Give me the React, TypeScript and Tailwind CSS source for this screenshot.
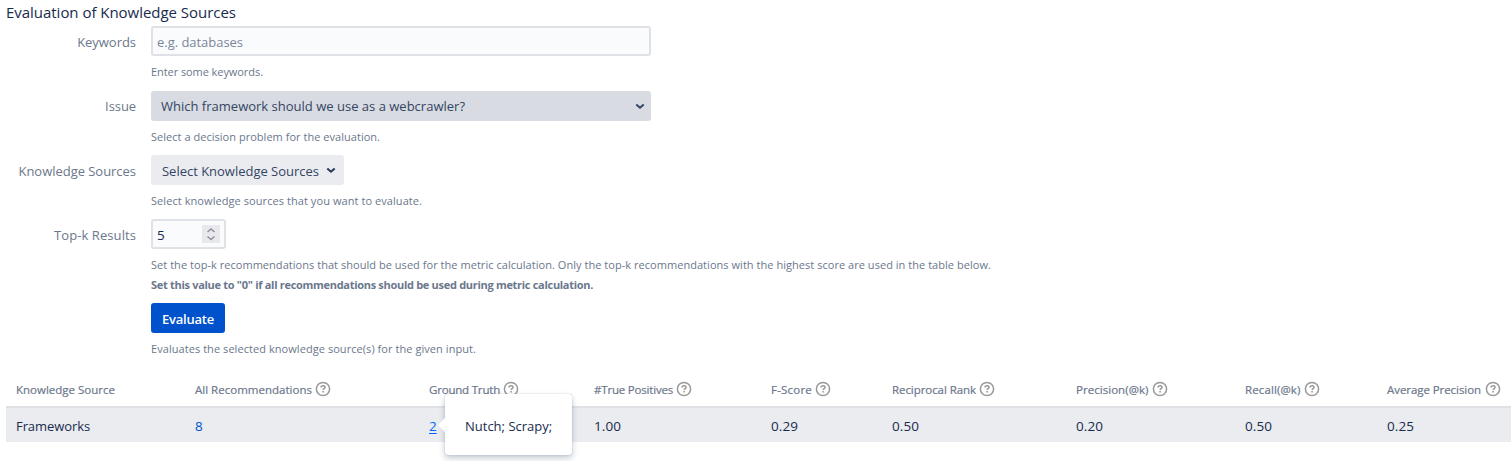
import type { ReactNode } from "react";

function HelpIcon() {
  return (
    <svg width="16" height="16" viewBox="0 0 16 16" fill="none" className="shrink-0" aria-hidden="true">
      <circle cx="8" cy="8" r="6.6" stroke="#999999" strokeWidth="1.5" />
      <path d="M6 6.5C6 5.3 6.8 4.7 8 4.7s2 .7 2 1.700c0 1.300-1.900 1.300-1.900 2.700" stroke="#999999" strokeWidth="1.5" />
      <path d="M8.1 10v1.5" stroke="#999999" strokeWidth="1.6" />
    </svg>
  );
}

function Chevron({ className }: { className: string }) {
  return (
    <svg width="10" height="7" viewBox="0 0 10 7" fill="none" stroke="currentColor" className={className} aria-hidden="true">
      <path d="M1.3 1.4 5 4.7l3.700-3.300" strokeWidth="2" />
    </svg>
  );
}

function Field({ label, labelClass, children }: { label: string; labelClass: string; children: ReactNode }) {
  return (
    <div className="flex">
      <div className={`w-[151px] shrink-0 pr-[15px] text-right leading-[20px] text-[#6b778c] ${labelClass}`}>{label}</div>
      <div className="flex flex-col items-start">{children}</div>
    </div>
  );
}

function Hint({ className, children }: { className: string; children: ReactNode }) {
  return <div className={`whitespace-nowrap text-[11px] leading-[20px] text-[#6b778c] ${className}`}>{children}</div>;
}

const columns = [
  { title: "Knowledge Source", value: "Frameworks", width: "w-[179px]", tracking: "tracking-[0.003px]", gap: "", help: false },
  { title: "All Recommendations", value: "8", width: "w-[234px]", tracking: "tracking-[0.014px]", gap: "ml-[3px]", help: true },
  { title: "Ground Truth", value: "2", width: "w-[165px]", tracking: "tracking-[-0.196px]", gap: "ml-[3px]", help: true },
  { title: "#True Positives", value: "1.00", width: "w-[177px]", tracking: "tracking-[-0.191px]", gap: "ml-[3px]", help: true },
  { title: "F-Score", value: "0.29", width: "w-[121px]", tracking: "tracking-[0.211px]", gap: "ml-[3px]", help: true },
  { title: "Reciprocal Rank", value: "0.50", width: "w-[184px]", tracking: "tracking-[-0.066px]", gap: "ml-[2.500px]", help: true },
  { title: "Precision(@k)", value: "0.20", width: "w-[169px]", tracking: "tracking-[0.040px]", gap: "ml-[3.500px]", help: true },
  { title: "Recall(@k)", value: "0.50", width: "w-[142px]", tracking: "tracking-[0.111px]", gap: "ml-[3px]", help: true },
  { title: "Average Precision", value: "0.25", width: "w-[134px]", tracking: "tracking-[-0.064px]", gap: "ml-[3.500px]", help: true },
];

function Popup() {
  return (
    <div className="absolute left-[26px] top-[-14px] z-10 flex h-[61px] w-[127px] items-center rounded-[3px] bg-white pl-5 pt-[2px] shadow-[0_3px_6px_rgba(9,30,66,0.25),0_0_1px_rgba(9,30,66,0.35)]">
      <svg width="8" height="16" viewBox="0 0 8 16" className="absolute left-[-7px] top-[23px]" aria-hidden="true">
        <path d="M8 0v16L0 8Z" fill="#ffffff" />
      </svg>
      <span className="whitespace-nowrap text-[13px]">Nutch; Scrapy;</span>
    </div>
  );
}

function Cell({ value }: { value: string }) {
  if (value === "8") return <a className="text-[13.500px] text-[#0052cc]">8</a>;
  if (value === "2") return <a className="text-[13.500px] text-[#0065ff] underline underline-offset-2">2</a>;
  if (value === "Frameworks") return <span className="tracking-[-0.081px]">{value}</span>;
  return <span className="text-[13.500px] tracking-[0.074px]">{value}</span>;
}

export default function App() {
  return (
    <div className="h-[461px] overflow-hidden bg-white font-['Open_Sans','Noto_Sans',sans-serif] text-[13px] text-[#172b4d]">
      <h1 className="h-[26px] pl-[6px] pt-px text-[15px] leading-[22px] tracking-[-0.030px]">Evaluation of Knowledge Sources</h1>

      <form className="flex flex-col">
        <div className="h-[65px]">
          <Field label="Keywords" labelClass="pt-[6px] tracking-[-0.040px]">
            <div className="flex h-[30px] w-[500px] items-center rounded-[3px] border-2 border-[#dfe1e6] bg-[#fafbfc] pl-1 pt-[3px] tracking-[-0.033px] text-[#7a869a]">e.g. databases</div>
            <Hint className="mt-[6px] tracking-[-0.070px]">Enter some keywords.</Hint>
          </Field>
        </div>
        <div className="h-[64px]">
          <Field label="Issue" labelClass="pt-[5px] tracking-[-0.080px]">
            <div className="flex h-[30px] w-[500px] items-center justify-between rounded-[3px] bg-[#d8dbe2] pl-[10px] pr-[6px] text-[#344563]">
              <span className="pt-px tracking-[0.006px]">Which framework should we use as a webcrawler?</span>
              <Chevron className="" />
            </div>
            <Hint className="mt-[6px] tracking-[0.030px]">Select a decision problem for the evaluation.</Hint>
          </Field>
        </div>
        <div className="h-[64px]">
          <Field label="Knowledge Sources" labelClass="pt-[6px] tracking-[-0.033px]">
            <div className="flex h-[30px] w-[193px] items-center rounded-[3px] bg-[#ebecf0] pl-[11px] text-[#344563]">
              <span className="w-[164px] whitespace-nowrap pt-[3px] tracking-[-0.013px]">Select Knowledge Sources</span>
              <Chevron className="text-[#253858]" />
            </div>
            <Hint className="mt-[6px] tracking-[0.070px]">Select knowledge sources that you want to evaluate.</Hint>
          </Field>
        </div>
        <div className="h-[84px]">
          <Field label="Top-k Results" labelClass="pt-[6px] tracking-[0.083px]">
            <div className="flex h-[30px] w-[75px] items-center justify-between rounded-[3px] border-2 border-[#dfe1e6] bg-[#fafbfc] pl-1 pr-1">
              <span className="pt-[2px] text-[13.500px]">5</span>
              <svg width="18" height="18" viewBox="0 0 18 18" fill="none" aria-hidden="true">
                <rect width="18" height="18" fill="#e9e9ed" />
                <path d="m5.500 7 3.500-3 3.500 3M5.500 11.500l3.500 3 3.500-3" stroke="#8f8f9d" strokeWidth="1.5" />
              </svg>
            </div>
            <Hint className="mt-[6px] tracking-[0.040px]">Set the top-k recommendations that should be used for the metric calculation. Only the top-k recommendations with the highest score are used in the table below.</Hint>
            <Hint className="font-bold tracking-[-0.298px]">Set this value to "0" if all recommendations should be used during metric calculation.</Hint>
          </Field>
        </div>
        <div className="h-[70px]">
          <Field label="" labelClass="">
            <button type="button" className="h-[30px] w-[74px] rounded-[3px] bg-[#0052cc] pl-[11px] pt-[3px] text-left font-semibold tracking-[-0.225px] text-white">Evaluate</button>
            <Hint className="mt-[6px] tracking-[0.059px]">Evaluates the selected knowledge source(s) for the given input.</Hint>
          </Field>
        </div>
      </form>

      <table className="ml-[6px] w-[1505px] table-fixed border-collapse">
        <thead>
          <tr className="h-[34px] border-b-2 border-[#dfe1e5]">
            {columns.map((c) => (
              <th key={c.title} className={`p-0 pl-[10px] text-left align-top text-[11.500px] font-medium text-[#6b778c] ${c.width}`}>
                <div className="flex h-[32px] items-center whitespace-nowrap">
                  <span className={`pt-px [-webkit-text-stroke:0.2px_#6b778c] ${c.tracking}`}>{c.title}</span>
                  {c.help && <span className={c.gap}><HelpIcon /></span>}
                </div>
              </th>
            ))}
          </tr>
        </thead>
        <tbody>
          <tr className="h-[35px] bg-[#ebecf0]">
            {columns.map((c) => (
              <td key={c.title} className="relative p-0 pl-[10px] pt-[2px] align-middle leading-[20px]">
                <Cell value={c.value} />
                {c.title === "Ground Truth" && <Popup />}
              </td>
            ))}
          </tr>
        </tbody>
      </table>
    </div>
  );
}
